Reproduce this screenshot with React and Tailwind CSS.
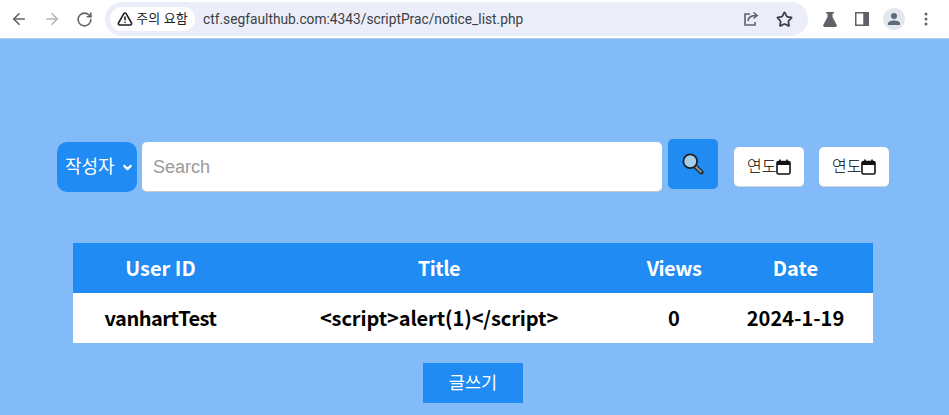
import React from "react";
import { ArrowLeft, ArrowRight, RotateCw, TriangleAlert, Star, ChevronDown } from "lucide-react";

const KR = "font-['Liberation_Sans','Noto_Sans_CJK_KR',sans-serif]";
const TABLE_FONT = "font-['Noto_Sans_CJK_KR','Noto_Sans',sans-serif]";

const Toolbar = () => (
  <div className="h-[39px] bg-white border-b border-[#b5cfe8] flex items-center text-[#5f6368]">
    <div className="flex items-center w-[105px] pl-[10px] gap-[15px] shrink-0">
      <ArrowLeft size={18} strokeWidth={2.2} />
      <ArrowRight size={18} strokeWidth={2.2} className="text-[#b4b6b9]" />
      <RotateCw size={17} strokeWidth={2.2} />
    </div>
    <div className="w-[703px] h-[34px] rounded-full bg-[#ebeef8] flex items-center pl-[5px] pr-[15px]">
      <div className={`h-[24px] w-[85px] rounded-full bg-white flex items-center justify-center gap-[3px] text-[13px] text-[#202124] ${KR}`}>
        <TriangleAlert size={16} strokeWidth={2.4} />
        <span>주의 요함</span>
      </div>
      <span className="ml-[8px] text-[13.75px] text-[#3c4043] font-['Roboto',sans-serif]">ctf.segfaulthub.com:4343/scriptPrac/notice_list.php</span>
      <div className="ml-auto flex items-center gap-[17px]">
        <svg width="16" height="16" viewBox="0 0 16 16" fill="none" stroke="#5f6368" strokeWidth="1.6">
          <path d="M7 3H2v11h10v-3" />
          <path d="M5 10c0-4 3-5.500 9-5.500M10.500 1.500 14.200 4.500 10.500 7.500" />
        </svg>
        <Star size={17} strokeWidth={2.5} className="text-[#3c4043]" />
      </div>
    </div>
    <div className="ml-[15px] flex items-center">
      <svg width="14" height="15" viewBox="0 0 14 15" fill="#5f6368">
        <path d="M3 0h8v1.500H9.500V5L14 13.500 13 15H1L0 13.500 4.500 5V1.500H3z" />
      </svg>
      <svg className="ml-[18px]" width="14" height="14" viewBox="0 0 14 14" fill="none" stroke="#5f6368" strokeWidth="1.500">
        <rect x="0.750" y="0.750" width="12.500" height="12.500" />
        <rect x="9" y="1" width="4" height="12" fill="#5f6368" />
      </svg>
      <div className="ml-[14px] w-[22px] h-[22px] rounded-full bg-[#e3e6ea] flex items-center justify-center">
        <svg width="14" height="14" viewBox="0 0 14 14" fill="#5b6b80">
          <circle cx="7" cy="4" r="3" />
          <path d="M1 13v-1.500C1 9.500 4 8.500 7 8.500s6 1 6 3V13z" />
        </svg>
      </div>
      <svg className="ml-[19px]" width="4" height="14" viewBox="0 0 4 14" fill="#5f6368">
        <circle cx="2" cy="2" r="1.500" />
        <circle cx="2" cy="7" r="1.500" />
        <circle cx="2" cy="12" r="1.500" />
      </svg>
    </div>
  </div>
);

const DateBox = ({ className }) => (
  <div className={`w-[70px] h-[40px] bg-white rounded-[5px] border-b border-[#d4d4d4] flex items-center pl-[13px] text-[16px] font-light text-black ${KR} ${className}`}>
    <span className="w-[29px] overflow-hidden whitespace-nowrap">연도</span>
    <svg width="15" height="16" viewBox="0 0 15 16" fill="none" stroke="#111" strokeWidth="1.600">
      <rect x="1" y="2.500" width="13" height="12.500" rx="1.500" />
      <path d="M1 4.500h13" strokeWidth="3" />
      <path d="M4 0.500v2M11 0.500v2" />
    </svg>
  </div>
);

const SearchBar = () => (
  <div className="mt-[100px] ml-[57px] flex items-start">
    <div className={`mt-[3px] w-[80px] h-[50px] rounded-[10px] bg-[#1f8bf3] text-white flex items-center pl-[8px] text-[18px] ${KR}`}>
      <span>작성자</span>
      <ChevronDown size={13} strokeWidth={4} className="ml-[6px]" />
    </div>
    <div className="mt-[3px] ml-[5px] w-[520px] h-[50px] pt-[1px] rounded-[5px] bg-white border-b border-[#c8c8c8] flex items-center pl-[11px] text-[18px] text-[#9a9a9a] font-['Liberation_Sans',sans-serif]">
      Search
    </div>
    <div className="ml-[6px] w-[50px] h-[50px] rounded-[5px] bg-[#1f8bf3] flex items-center justify-center">
      <svg width="22" height="22" viewBox="0 0 24 24">
        <path d="M14 14 L21 21" stroke="#222" strokeWidth="5" strokeLinecap="round" />
        <path d="M14.500 14.500 L20.500 20.500" stroke="#8a9097" strokeWidth="2.500" strokeLinecap="round" />
        <circle cx="9" cy="9" r="7.500" fill="#a3cdea" stroke="#222" strokeWidth="2" />
      </svg>
    </div>
    <DateBox className="mt-[8px] ml-[16px]" />
    <DateBox className="mt-[8px] ml-[15px]" />
  </div>
);

const Row = ({ children, className }) => (
  <div className={`grid grid-cols-[175px_382px_88px_155px] h-[50px] items-center text-center text-[20px] font-bold ${TABLE_FONT} ${className}`}>
    {children}
  </div>
);

export default function App() {
  return (
    <div className="w-[949px] h-[415px] overflow-hidden bg-[#82bbf7]">
      <Toolbar />
      <SearchBar />
      <div className="mt-[51px] ml-[73px] w-[800px]">
        <Row className="bg-[#1f8bf3] text-white">
          <div>User ID</div>
          <div className="tracking-[-0.5px]">Title</div>
          <div className="tracking-[-0.5px]">Views</div>
          <div>Date</div>
        </Row>
        <Row className="bg-white text-black">
          <div className="tracking-[-0.5px]">vanhartTest</div>
          <div className="tracking-[-0.1px]">{"<script>alert(1)</script>"}</div>
          <div>0</div>
          <div>2024-1-19</div>
        </Row>
      </div>
      <div className={`mt-[20px] ml-[423px] w-[100px] h-[40px] bg-[#1f8bf3] text-white flex items-center justify-center text-[17.5px] ${KR}`}>
        글쓰기
      </div>
    </div>
  );
}
